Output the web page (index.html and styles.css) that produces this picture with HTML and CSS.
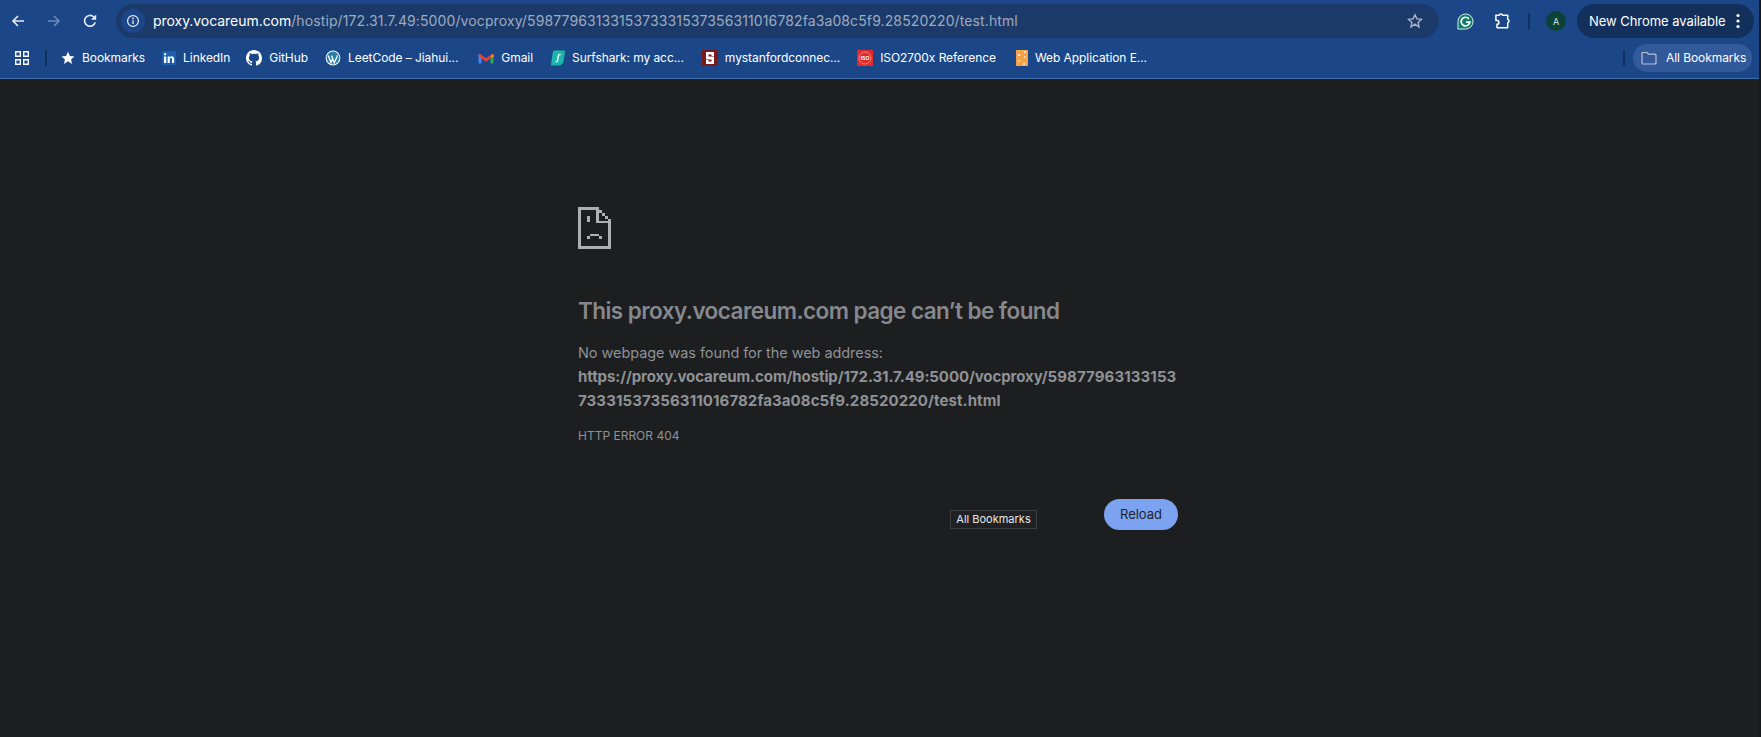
FILE: index.html
```html
<!DOCTYPE html>
<html lang="en">
<head>
<meta charset="utf-8">
<title>proxy.vocareum.com</title>
<link rel="stylesheet" href="styles.css">
</head>
<body>
<header class="chrome">
  <div class="toolbar">
    <div class="nav">
      <svg class="ic" viewBox="0 0 16 16"><path d="M14 8H3M8 3 3 8l5 5" fill="none" stroke="#e6ebf4" stroke-width="1.6"/></svg>
      <svg class="ic" viewBox="0 0 16 16"><path d="M2 8h11M8 3l5 5-5 5" fill="none" stroke="#6d8abb" stroke-width="1.6"/></svg>
      <svg class="ic" viewBox="0 0 16 16"><path d="M13.2 9.2A5.4 5.4 0 1 1 11.8 4L13.6 5.8" fill="none" stroke="#e6ebf4" stroke-width="1.6"/><path d="M14.2 1.6v5.2H9z" fill="#e6ebf4"/></svg>
    </div>
    <div class="omnibox">
      <span class="site-info">
        <svg viewBox="0 0 16 16" width="14" height="14"><circle cx="8" cy="8" r="6.2" fill="none" stroke="#e6ebf4" stroke-width="1.4"/><path d="M8 7.2v4.3" stroke="#e6ebf4" stroke-width="1.5"/><circle cx="8" cy="5" r="1" fill="#e6ebf4"/></svg>
      </span>
      <span class="url"><span class="host">proxy.vocareum.com</span>/hostip/172.31.7.49:5000/vocproxy/5987796313315373331537356311016782fa3a08c5f9.28520220/test.html</span>
      <svg class="star" viewBox="0 0 16 16" width="16" height="16"><path d="m8 1.800 1.900 4.100 4.500.5-3.300 3.100.9 4.500L8 11.200l-4 2.800.9-4.500L1.600 6.400l4.500-.5z" fill="none" stroke="#aab6c9" stroke-width="1.400"/></svg>
    </div>
    <div class="actions">
      <svg class="grammarly" viewBox="0 0 18 18" width="17" height="17"><path d="M9 1a8 8 0 0 1 0 16H1V9a8 8 0 0 1 8-8z" fill="#0f7d68" stroke="#e8f3ef" stroke-width="1"/><path d="M12.600 6.200A4.600 4.600 0 1 0 13.600 9.600H9.500" fill="none" stroke="#fff" stroke-width="1.800"/></svg>
      <svg class="puzzle" viewBox="0 0 18 18" width="17" height="17"><path d="M2 2.500h3.400a2 2 0 0 1 3.800 0h5.300v4.200a2 2 0 0 1 0 3.800v5.200H3.200V12a2 2 0 0 0 0-4H2z" fill="none" stroke="#fff" stroke-width="1.600" stroke-linejoin="round"/></svg>
      <span class="divider"></span>
      <span class="avatar">A</span>
      <span class="update">New Chrome available
        <svg viewBox="0 0 4 16" width="4" height="16"><circle cx="2" cy="2.500" r="1.600" fill="#fff"/><circle cx="2" cy="8" r="1.600" fill="#fff"/><circle cx="2" cy="13.500" r="1.600" fill="#fff"/></svg>
      </span>
    </div>
  </div>
  <nav class="bookmarks">
    <svg class="apps" viewBox="0 0 14 14" width="14" height="14"><path d="M.7.7h4.600v4.600H.7zM8.700.7h4.600v4.600H8.700zM.7 8.700h4.600v4.600H.7zM8.700 8.700h4.600v4.600H8.700z" fill="none" stroke="#fff" stroke-width="1.400"/></svg>
    <span class="divider"></span>
    <a class="bm bm-first"><svg viewBox="0 0 14 14" width="14" height="14"><path d="m7 .8 1.900 4.100 4.500.5-3.300 3.100.9 4.500L7 10.300l-4 2.700.9-4.500L.6 5.400l4.500-.5z" fill="#fff"/></svg>Bookmarks</a>
    <a class="bm bm-tight"><svg viewBox="0 0 14 14" width="14" height="14"><rect width="14" height="14" fill="#1c5fb0"/><path d="M2 5.400h2.200V12H2zM2 2.200h2.200v2H2zM5.600 5.400h2.100v1c.5-.8 1.200-1.200 2.100-1.200 1.700 0 2.300 1.100 2.300 2.900V12H10V8.400c0-.9-.3-1.400-1-1.400-.8 0-1.200.6-1.200 1.500V12H5.600z" fill="#fff"/></svg>LinkedIn</a>
    <a class="bm bm-tighter"><svg viewBox="0 0 16 16" width="16" height="16"><path fill="#fff" d="M8 0C3.580 0 0 3.580 0 8c0 3.540 2.290 6.530 5.470 7.590.4.07.55-.17.55-.38 0-.19-.01-.82-.01-1.490-2.010.37-2.530-.49-2.690-.94-.09-.23-.48-.94-.82-1.130-.28-.15-.68-.52-.01-.53.63-.01 1.080.58 1.230.82.72 1.210 1.870.87 2.330.66.07-.52.28-.87.51-1.070-1.780-.2-3.640-.89-3.640-3.950 0-.87.31-1.590.82-2.150-.08-.2-.36-1.020.08-2.120 0 0 .67-.21 2.200.82.64-.18 1.320-.27 2-.27s1.360.09 2 .27c1.530-1.040 2.200-.82 2.200-.82.44 1.100.16 1.920.08 2.120.51.56.82 1.270.82 2.150 0 3.070-1.870 3.750-3.650 3.950.29.25.54.73.54 1.480 0 1.070-.01 1.930-.01 2.200 0 .21.15.46.55.38A8.010 8.010 0 0 0 16 8c0-4.420-3.580-8-8-8z"/></svg>GitHub</a>
    <a class="bm bm-tight"><svg viewBox="0 0 16 16" width="16" height="16"><circle cx="8" cy="8" r="7.400" fill="#fff"/><circle cx="8" cy="8" r="6.400" fill="#2a7fa5"/><path d="M3.200 5.600 6 12.800l1.600-4.200-1-2.800M6.600 5.600l2.600 7.200L12 7c.3-.8-.1-1.400-.4-1.600" fill="none" stroke="#fff" stroke-width="1.300"/></svg>LeetCode – Jiahui...</a>
    <a class="bm bm-loose"><svg viewBox="0 0 16 12" width="16" height="12"><path d="M2 11.500V3" fill="none" stroke="#4285f4" stroke-width="3"/><path d="M14 11.500V3" fill="none" stroke="#34a853" stroke-width="3"/><path d="M.8 2.500 8 8l7.200-5.500" fill="none" stroke="#ea4335" stroke-width="2.600"/><path d="M12.500 4.500 15.500 2.200V5z" fill="#fbbc04"/></svg>Gmail</a>
    <a class="bm"><svg viewBox="0 0 14 16" width="14" height="16"><path d="M4 .5h9c.6 0 1 .4 1 1l-1.400 9.500c-.4 2.600-2.200 4.500-5.400 4.500H1c-.6 0-1-.4-1-1L1.800 2.500C2 1.300 2.900.5 4 .5z" fill="#1db5ab"/><path d="M9.600 4.600C8 4.200 7.300 5 7.100 7l-.4 3.100c-.2 1.200-.9 1.800-2.100 1.500" fill="none" stroke="#fff" stroke-width="1.300"/></svg>Surfshark: my acc...</a>
    <a class="bm"><svg viewBox="0 0 16 16" width="16" height="16"><rect width="16" height="16" fill="#7a1a1a"/><path d="M4 2h8v4H9.500V4.500h-3v2H12V14H4v-4h2.500v1.500h3v-2H4z" fill="#fff"/></svg>mystanfordconnec...</a>
    <a class="bm bm-tight"><svg viewBox="0 0 16 16" width="16" height="16"><rect width="16" height="16" rx="1" fill="#e32b2b"/><circle cx="8" cy="8" r="6" fill="none" stroke="#f59c9c" stroke-width=".8"/><text x="8" y="10" class="iso">ISO</text></svg>ISO2700x Reference</a>
    <a class="bm bm-loose"><svg viewBox="0 0 12 16" width="12" height="16"><rect width="12" height="16" fill="#f5a34a"/><circle cx="3" cy="5" r="1" fill="#fff"/><circle cx="9" cy="2" r="1" fill="#fff"/><circle cx="9" cy="7" r=".8" fill="#fff"/><circle cx="3" cy="11" r=".8" fill="#fff"/><circle cx="8" cy="14" r="1" fill="#fff"/></svg>Web Application E...</a>
    <span class="bm-spacer"></span>
    <span class="divider"></span>
    <a class="all-bm"><svg viewBox="0 0 16 14" width="16" height="14"><path d="M1 2.500a1 1 0 0 1 1-1h4l1.500 1.700H14a1 1 0 0 1 1 1V12a1 1 0 0 1-1 1H2a1 1 0 0 1-1-1z" fill="none" stroke="#b9c3d3" stroke-width="1.200"/></svg>All Bookmarks</a>
  </nav>
</header>
<main class="page">
  <div class="error">
    <svg class="sad" viewBox="0 0 33 42" width="33" height="42" shape-rendering="crispEdges"><path fill="#aeafb1" d="M0 0h21v3H3v36h27V12h3v30H0zM18 3h3v11h12v2H18zM21 3h3v3h-3zM24 6h3v3h-3zM27 9h3v3h-3zM9 9h3v6H9zM12 27h9v2h-9zM9 29h3v3H9zM21 29h3v3h-3z"/></svg>
    <h1>This proxy.vocareum.com page can’t be found</h1>
    <p class="desc">No webpage was found for the web address:<br><strong class="addr"><span class="addr-path">https://proxy.vocareum.com/hostip/172.31.7.49:5000/vocproxy/</span>5987796313315373331537356311016782fa3a08c5f9.28520220/test.html</strong></p>
    <p class="code">HTTP ERROR 404</p>
    <div class="btn-row"><button class="reload">Reload</button></div>
  </div>
  <span class="tooltip">All Bookmarks</span>
</main>
</body>
</html>
```

FILE: styles.css
```css
* { box-sizing: border-box; }
html, body { margin: 0; height: 100%; overflow: hidden; }
body {
  background: #1d1e20;
  font-family: Inter, "Liberation Sans", sans-serif;
  display: flex;
  flex-direction: column;
  border-right: 2px solid #17181a;
}
.chrome {
  height: 79px;
  flex: none;
  background: #1b4789;
  border-bottom: 1px solid #3f6cab;
  padding-top: 4px;
}
.toolbar {
  height: 34px;
  display: flex;
  align-items: center;
}
.nav {
  width: 116px;
  flex: none;
  display: flex;
  align-items: center;
  gap: 20px;
  padding-left: 10px;
}
.ic { width: 16px; height: 16px; flex: none; }
.omnibox {
  width: 1323px;
  height: 34px;
  flex: none;
  border-radius: 17px;
  background: #1c3a69;
  display: flex;
  align-items: center;
  color: #9dabc0;
  font-size: 14px;
  letter-spacing: .11px;
}
.site-info {
  width: 24px;
  height: 24px;
  margin-left: 5px;
  margin-right: 8px;
  border-radius: 50%;
  background: #1b4789;
  display: flex;
  align-items: center;
  justify-content: center;
  flex: none;
}
.url { flex: 1; white-space: nowrap; overflow: hidden; padding-bottom: 1px; }
.host { color: #fff; letter-spacing: -.05px; }
.star { margin-right: 16px; flex: none; }
.actions {
  flex: 1;
  display: flex;
  align-items: center;
}
.grammarly { margin-left: 18px; }
.puzzle { margin-left: 20px; }
.divider {
  width: 2px;
  height: 16px;
  background: #12305c;
  flex: none;
}
.actions .divider { margin-left: 17px; }
.avatar {
  width: 20px;
  height: 20px;
  margin-left: 16px;
  border-radius: 50%;
  background: #0c4238;
  color: #d7e6e0;
  font-size: 9px;
  display: flex;
  align-items: center;
  justify-content: center;
}
.update {
  margin-left: 11px;
  width: 177px;
  height: 34px;
  border-radius: 17px;
  background: #132f5b;
  color: #fff;
  font-size: 13px;
  letter-spacing: -.05px;
  display: flex;
  align-items: center;
  justify-content: space-between;
  padding: 0 14px 0 12px;
}
.bookmarks {
  height: 40px;
  display: flex;
  align-items: center;
  padding: 0 0 1px 15px;
  color: #fff;
  font-size: 12px;
  letter-spacing: -.07px;
}
.bookmarks > .divider { margin-left: 16px; }
.bm {
  display: flex;
  align-items: center;
  gap: 7px;
  margin-left: 18px;
  white-space: nowrap;
}
.bm-first { margin-left: 14px; }
.bm-tight { margin-left: 17px; }
.bm-tighter { margin-left: 16px; }
.bm-loose { margin-left: 20px; }
.iso { font: bold 5px "Liberation Sans", sans-serif; fill: #fff; text-anchor: middle; }
.bm-spacer { flex: 1; }
.all-bm {
  width: 119px;
  height: 28px;
  margin: 0 7px 0 8px;
  border-radius: 14px;
  background: #32599a;
  display: flex;
  align-items: center;
  gap: 9px;
  padding-left: 8px;
  white-space: nowrap;
}
.page {
  flex: 1;
  position: relative;
  padding: 128px 0 0 578px;
}
.error { width: 600px; color: #8f9296; }
.sad { display: block; }
h1 {
  margin: 47px 0 0;
  font-size: 22.5px;
  line-height: 30px;
  font-weight: 600;
  letter-spacing: -.56px;
  color: #85888d;
}
.desc {
  margin: 15px 0 0;
  font-size: 14.5px;
  line-height: 24px;
  letter-spacing: -.07px;
  word-break: break-all;
}
.addr { font-size: 15px; letter-spacing: .1px; }
.addr-path { letter-spacing: -.08px; }
.code {
  margin: 14px 0 0;
  font-size: 12px;
  line-height: 18px;
}
.btn-row { display: flex; justify-content: flex-end; margin-top: 54px; }
.reload {
  width: 74px;
  height: 31px;
  border: 0;
  border-radius: 16px;
  background: #7ca3f1;
  color: #1f2329;
  font: 13px Inter, "Liberation Sans", sans-serif;
  padding-bottom: 2px;
}
.tooltip {
  position: absolute;
  left: 950px;
  top: 431px;
  width: 87px;
  height: 19px;
  background: #202124;
  border: 1px solid #3c3d40;
  color: #e8e8e8;
  font-size: 11px;
  line-height: 16px;
  text-align: center;
}
```
